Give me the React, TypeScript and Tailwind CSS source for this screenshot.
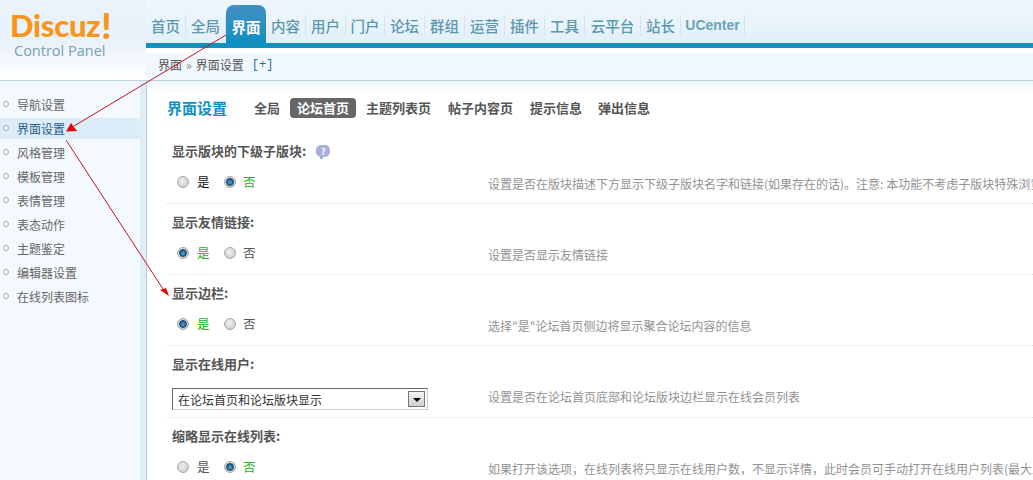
import React from "react";

const cjk = { fontFamily: '"Noto Sans CJK SC", "Liberation Sans", sans-serif' };

const navItems: [string, string][] = [
  ["首页", "w-[40px]"], ["全局", "w-[40px]"], ["界面", "w-[40px]"], ["内容", "w-[40px]"], ["用户", "w-[40px]"],
  ["门户", "w-[39px]"], ["论坛", "w-[40px]"], ["群组", "w-[40px]"], ["运营", "w-[40px]"], ["插件", "w-[40px]"],
  ["工具", "w-[40px]"], ["云平台", "w-[56px]"], ["站长", "w-[40px]"],
];

const sideItems = ["导航设置", "界面设置", "风格管理", "模板管理", "表情管理", "表态动作", "主题鉴定", "编辑器设置", "在线列表图标"];
const tabs: [string, string][] = [
  ["主题列表页", "w-[82px]"], ["帖子内容页", "w-[82px]"], ["提示信息", "w-[68px]"], ["弹出信息", "w-[68px]"],
];

function Radio({ on }: { on: boolean }) {
  return (
    <span className="flex h-[12px] w-[12px] shrink-0 items-center justify-center rounded-full border border-[#a5a9ab] bg-[radial-gradient(circle_at_45%_40%,#f0f0f0,#c4c4c4)]">
      {on && <span className="h-[8px] w-[8px] rounded-full border border-[#123f63] bg-[radial-gradient(circle_at_50%_60%,#4aa8d6,#0c4468)]" />}
    </span>
  );
}

function YesNo({ yes, blackYes }: { yes: boolean; blackYes?: boolean }) {
  return (
    <div className="flex h-[26px] items-center pl-[10px] text-[12.5px]">
      <Radio on={yes} />
      <span className={`ml-[8px] w-[27px] ${yes ? "text-[#22b022]" : blackYes ? "text-[#111]" : "text-[#555]"}`}>是</span>
      <Radio on={!yes} />
      <span className={`ml-[7px] ${yes ? "text-[#555]" : "text-[#22b022]"}`}>否</span>
    </div>
  );
}

function Row({ title, help, desc, children, last }: { title: string; help?: boolean; desc: string; children: React.ReactNode; last?: boolean }) {
  return (
    <div className={`ml-[20px] w-[900px] ${last ? "" : "border-b border-dotted border-[#d6e1e1]"}`}>
      <div className="flex h-[36px] items-center gap-[10px] pl-[5px] text-[13px] font-bold text-[#555]">
        <span>{title}</span>
        {help && (
          <span className="relative flex h-[12px] w-[14px] items-center justify-center rounded-[5px] bg-[#a9afdc] text-[9px] font-bold leading-none text-white">
            ?
            <span className="absolute bottom-[-2px] left-[4px] h-[3px] w-[3px] bg-[#a9afdc]" />
          </span>
        )}
      </div>
      <div className="flex pb-[8px]">
        <div className="w-[321px] shrink-0">{children}</div>
        <div className="flex h-[26px] w-[700px] shrink-0 items-center whitespace-nowrap pt-[4px] text-[12px] text-[#929292]">{desc}</div>
      </div>
    </div>
  );
}

export default function App() {
  return (
    <div style={cjk} className="relative h-[480px] w-[1033px] overflow-hidden bg-white">
      {/* Header */}
      <div className="flex h-[81px]">
        <div className="h-[81px] w-[146px] shrink-0 border-b border-[#bcd3e0] bg-gradient-to-b from-[#eaf3fb] via-[#e8f2fa] to-white pl-[10px] pt-[10px]">
          <div style={{ fontFamily: "Lato, sans-serif" }} className="flex h-[30px] items-end font-black text-[#fb9518]">
            <span className="text-[31px] leading-[30px] tracking-[-0.3px]">Discuz</span>
            <span className="ml-[1px] text-[36px] leading-[30px]">!</span>
          </div>
          <div style={{ fontFamily: '"Open Sans", sans-serif' }} className="mt-[2px] pl-[4px] text-[14.5px] leading-[18px] text-[#789fb4]">
            Control Panel
          </div>
        </div>
        <div className="flex min-w-0 flex-1 flex-col">
          <div className="flex h-[43px] items-end bg-gradient-to-b from-[#eff7fc] to-[#e3f0f9]">
            <div className="flex h-[38px]">
              {navItems.map(([t, w]) =>
                t === "界面" ? (
                  <div key={t} className={`${w} flex h-[38px] items-start justify-center rounded-t-[8px] bg-gradient-to-b from-[#3f8fc4] to-[#0c8fc2] pt-[12px] text-[14.5px] font-bold leading-[20px] text-white`}>
                    {t}
                  </div>
                ) : (
                  <div key={t} className="flex h-[38px] items-start pt-[10px]">
                    <div className={`${w} h-[21px] border-r border-[#d5e4ee] text-center text-[14.5px] font-medium leading-[21px] text-[#5b97ae]`}>{t}</div>
                  </div>
                ),
              )}
              <div className="flex h-[38px] items-start pt-[10px]">
                <div style={{ fontFamily: '"Liberation Sans", sans-serif' }} className="h-[21px] w-[64px] border-r border-[#d5e4ee] text-center text-[14px] font-bold leading-[21px] text-[#69a4ba]">
                  UCenter
                </div>
              </div>
            </div>
          </div>
          <div className="h-[5px] bg-[#0f92c0]" />
          <div className="h-[5px] bg-white" />
          <div className="flex h-[28px] items-center border-b border-[#bcd3e0] bg-[#f1f8fd] pb-[3px] pl-[12px] text-[12px] text-[#555]">
            <span>界面</span>
            <span className="ml-[4px] mr-[4px] text-[12px] text-[#888]">»</span>
            <span>界面设置</span>
            <span className="ml-[8px] text-[#2c6f9f]" style={{ fontFamily: '"Liberation Mono", monospace' }}>[+]</span>
          </div>
        </div>
      </div>

      {/* Body */}
      <div className="flex h-[399px]">
        <div className="flex w-[147px] shrink-0 border-r border-[#b8d2e2] bg-[#dfedf7]">
          <div className="w-[140px] shrink-0 bg-[#f3f9fe] pt-[13px]">
            {sideItems.map((s) => {
              const active = s === "界面设置";
              return (
                <div key={s} className={`mb-[3px] flex h-[21px] items-center pl-[3px] text-[12px] ${active ? "bg-[#dcedf9] text-[#1d5d8c]" : "text-[#666]"}`}>
                  <span className="mb-[2px] h-[6px] w-[6px] rounded-full border border-[#a3a9a9] bg-white" />
                  <span className="ml-[8px]">{s}</span>
                </div>
              );
            })}
          </div>
        </div>
        <div className="min-w-0 flex-1 bg-[linear-gradient(#eef6fb,#ffffff)] bg-[length:100%_12px] bg-no-repeat">
          <div className="flex h-[52px] items-start pl-[20px] pt-[17px]">
            <span className="w-[87px] text-[15px] font-bold leading-[20px] text-[#1191bd]">界面设置</span>
            <span className="w-[36px] text-[13px] font-bold leading-[20px] text-[#555]">全局</span>
            <span className="flex h-[20px] w-[66px] items-center justify-center rounded-[4px] bg-[#666] text-[13px] font-bold text-white">论坛首页</span>
            <div className="ml-[10px] flex">
              {tabs.map(([t, w]) => (
                <span key={t} className={`${w} text-[13px] font-bold leading-[20px] text-[#555]`}>{t}</span>
              ))}
            </div>
          </div>

          <Row title="显示版块的下级子版块:" help desc="设置是否在版块描述下方显示下级子版块名字和链接(如果存在的话)。注意: 本功能不考虑子版块特殊浏览权限的情况,只要存在即会被显示出来">
            <YesNo yes={false} blackYes />
          </Row>
          <Row title="显示友情链接:" desc="设置是否显示友情链接">
            <YesNo yes />
          </Row>
          <Row title="显示边栏:" desc={'选择"是"论坛首页侧边将显示聚合论坛内容的信息'}>
            <YesNo yes />
          </Row>
          <Row title="显示在线用户:" desc="设置是否在论坛首页底部和论坛版块边栏显示在线会员列表">
            <div className="-mb-[1px] ml-[5px] mt-[6px] flex h-[22px] w-[256px] items-center justify-between border border-b-[#ccc] border-l-[#666] border-r-[#ccc] border-t-[#666] pl-[5px] pr-[2px] text-[12px] text-[#333]">
              <span className="pt-[1px]">在论坛首页和论坛版块显示</span>
              <span className="flex h-[16px] w-[17px] items-center justify-center border border-[#777] bg-gradient-to-b from-[#f5f5f5] to-[#cfcfcf]">
                <span className="mt-[2px] h-0 w-0 border-x-[4px] border-t-[4px] border-x-transparent border-t-black" />
              </span>
            </div>
          </Row>
          <Row title="缩略显示在线列表:" last desc="如果打开该选项，在线列表将只显示在线用户数，不显示详情，此时会员可手动打开在线用户列表(最大显示人数受设置限制)">
            <YesNo yes={false} />
          </Row>
        </div>
      </div>

      {/* Red annotation arrows */}
      <svg className="pointer-events-none absolute left-0 top-0" width="1033" height="480" viewBox="0 0 1033 480">
        <line x1="226" y1="35" x2="74" y2="126" stroke="#c8141c" strokeWidth="1" />
        <polygon points="66,131.5 71,123 77,131" fill="#e8000c" />
        <line x1="66" y1="140" x2="163" y2="289" stroke="#c8141c" strokeWidth="1" />
        <polygon points="169,296 160,290 166,288" fill="#e8000c" />
      </svg>
    </div>
  );
}
